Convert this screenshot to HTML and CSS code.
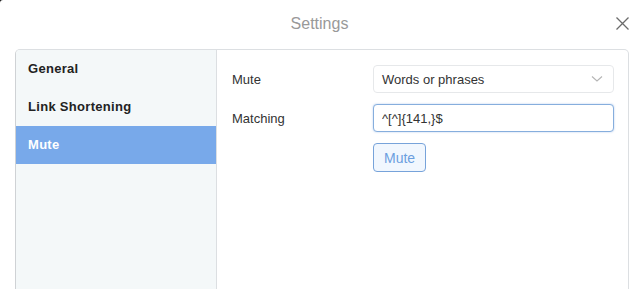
FILE: index.html
```html
<!DOCTYPE html>
<html lang="en">
<head>
<meta charset="UTF-8">
<meta name="viewport" content="width=device-width, initial-scale=1.0">
<title>Settings</title>
<link rel="stylesheet" href="styles.css">
</head>
<body>
<div class="dialog">
    <div class="dialog-header">
        <span class="dialog-title">Settings</span>
        <button class="close-btn" aria-label="Close">
            <svg width="13" height="13" viewBox="0 0 13 13">
                <path d="M0.5 0.5 L12.5 12.5 M12.5 0.5 L0.5 12.5" stroke="#6b6b6b" stroke-width="1.3" fill="none"/>
            </svg>
        </button>
    </div>

    <!-- settings panel -->
    <div class="settings">
        <ul class="side-menu">
            <li>General</li>
            <li>Link Shortening</li>
            <li class="active">Mute</li>
        </ul>
        <div class="content">
            <div class="row">
                <label class="row-label">Mute</label>
                <div class="select">
                    <span>Words or phrases</span>
                    <svg width="12" height="8" viewBox="0 0 12 8">
                        <path d="M1 1.5 L6 6 L11 1.5" stroke="#b5b5b5" stroke-width="1.1" fill="none"/>
                    </svg>
                </div>
            </div>
            <div class="row">
                <label class="row-label" for="matching">Matching</label>
                <input type="text" id="matching" class="text-input" value="^[^]{141,}$">
            </div>
            <div class="row">
                <span class="row-label"></span>
                <button class="mute-btn">Mute</button>
            </div>
        </div>
    </div>
</div>
</body>
</html>
```

FILE: styles.css
```css
html {
    background-color: #111;
}

body {
    margin: 0;
    padding: 0;
    font-family: "Liberation Sans", Arial, sans-serif;
    color: #333;
}

.dialog {
    background-color: #fff;
    height: 289px;
    border-top-left-radius: 3px;
    overflow: hidden;
}

.dialog-header {
    position: relative;
    height: 46px;
    padding-top: 2px;
    box-sizing: border-box;
    display: flex;
    align-items: center;
    justify-content: center;
}

.dialog-title {
    font-size: 16px;
    color: #999;
}

.close-btn {
    position: absolute;
    right: 10px;
    top: 17px;
    padding: 0;
    border: none;
    background: none;
    line-height: 0;
    cursor: pointer;
}

.settings {
    display: flex;
    margin: 3px 10px 0 15px;
    height: 260px;
    border: 1px solid #dcdfe2;
    border-left-color: #cfd2d5;
    border-radius: 5px 5px 0 0;
    overflow: hidden;
}

.side-menu {
    list-style: none;
    margin: 0;
    padding: 0;
    width: 200px;
    background-color: #f4f8f9;
    border-right: 1px solid #dcdfe2;
}

.side-menu li {
    height: 38px;
    line-height: 38px;
    padding: 0 12px;
    font-size: 13px;
    font-weight: bold;
    letter-spacing: 0.3px;
    color: #222;
}

.side-menu li.active {
    background-color: #78a9ea;
    color: #fff;
}

.content {
    flex: 1;
    padding: 15px 14px 0 15px;
    display: flex;
    flex-direction: column;
    gap: 11px;
}

.row {
    display: flex;
    align-items: center;
}

.row-label {
    width: 141px;
    font-size: 13px;
    color: #333;
}

.select {
    flex: 1;
    height: 26px;
    border: 1px solid #e6e8ea;
    border-radius: 4px;
    display: flex;
    align-items: center;
    justify-content: space-between;
    padding: 0 10px 0 8px;
    font-size: 13px;
    color: #333;
}

.text-input {
    flex: 1;
    height: 26px;
    box-sizing: border-box;
    height: 28px;
    border: 1px solid #86aedd;
    border-radius: 4px;
    padding: 0 8px;
    font-family: "Liberation Sans", Arial, sans-serif;
    font-size: 13px;
    color: #333;
    box-shadow: 0 0 2px rgba(100, 150, 220, 0.5);
    outline: none;
}

.mute-btn {
    height: 29px;
    padding: 0 10px;
    border: 1px solid #77a3da;
    border-radius: 4px;
    background-color: #f1f7fe;
    color: #6c9fdf;
    font-family: "Liberation Sans", Arial, sans-serif;
    font-size: 14px;
    cursor: pointer;
}
```
